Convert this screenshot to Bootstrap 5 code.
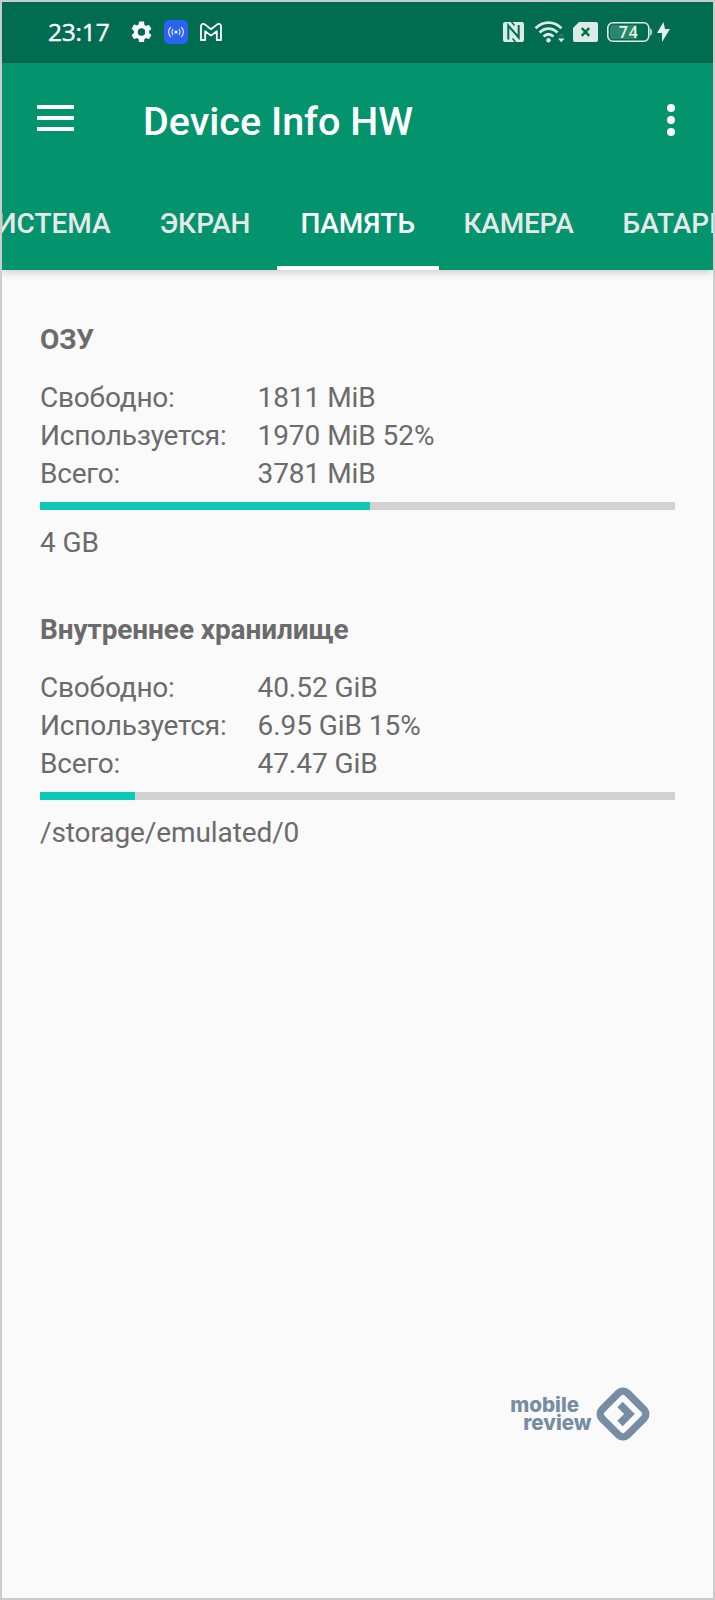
<!DOCTYPE html>
<html lang="ru">
<head>
<meta charset="utf-8">
<meta name="viewport" content="width=device-width, initial-scale=1">
<title>Device Info HW</title>
<link href="https://cdn.jsdelivr.net/npm/bootstrap@5.3.0/dist/css/bootstrap.min.css" rel="stylesheet">
<style>
  body { font-family: Roboto, "Noto Sans", sans-serif; color: #6b6b6b; background: #fafafa; }
  .screen { height: 1600px; border: 2px solid #ccc; background: #fafafa; }
  .status { height: 61px; background: #006c50; color: #fff; padding: 0 43px 2px 46px; }
  .status svg { display: block; flex: none; }
  .clock { font-family: "Open Sans", Roboto, sans-serif; font-size: 24.5px; font-weight: 500; line-height: 59px; width: 83px; letter-spacing: -.2px; -webkit-text-stroke: .4px #fff; }
  .gear { margin-right: 12px; }
  .cast { margin-right: 12px; }
  .wifi { margin: 0 8px 0 10px; }
  .battery { margin: 0 4px 0 9px; }
  .appbar { height: 207px; background: #03946e; color: #fff; box-shadow: 0 2px 9px rgba(0,0,0,.2); }
  .toolbar { height: 110px; padding-left: 35px; padding-right: 38px; }
  .app-title { font-size: 39.5px; font-weight: 500; line-height: 48px; margin: 8px 0 0 69px; }
  .tabs { height: 97px; margin-left: -48px; font-size: 28px; font-weight: 500; }
  .tabs .nav-link { color: #e6e9e8; padding: 32px 24.5px 0; height: 97px; line-height: 38px; white-space: nowrap; border-radius: 0; }
  .tabs .nav-link.active { color: #fff; border-bottom: 4px solid #fff; margin-left: 2px; padding-left: 23.5px; padding-right: 24px; }
  .tabs .active + .nav-link { letter-spacing: -.2px; }
  .content { padding: 51px 38px 0; font-size: 28px; line-height: 38px; }
  .section { height: 290px; }
  .section h2 { font-size: 28px; font-weight: 700; line-height: 38px; margin: 0 0 20px; letter-spacing: -.1px; }
  .info { display: grid; grid-template-columns: 217.5px 1fr; margin: 0; }
  .info dt { font-weight: 400; letter-spacing: -.2px; }
  .info dd { margin: 0; letter-spacing: -.05px; }
  .meter { height: 8px; border-radius: 0; background: #d2d2d2; margin: 9px 0 14px; }
  .meter .progress-bar { background: #0bc9b5; }
  .note { letter-spacing: -.1px; }
  .brand { color: #768da3; margin: 0 63.5px 157px 0; font-family: Inter, sans-serif; font-weight: 800; font-size: 20.5px; line-height: 18px; }
  .brand-name { margin-right: 4px; }
  .brand-name div + div { margin-left: 13px; }
</style>
</head>
<body>
<div class="screen d-flex flex-column overflow-hidden">
  <div class="status d-flex align-items-center">
    <span class="clock">23:17</span>
    <svg class="gear" width="21" height="22" viewBox="2 2 20 20" fill="#fff"><path d="M19.14 12.94c.04-.3.06-.61.06-.94s-.02-.64-.07-.94l2.03-1.58a.49.49 0 0 0 .12-.61l-1.92-3.32a.49.49 0 0 0-.59-.22l-2.39.96a7 7 0 0 0-1.62-.94l-.36-2.54A.48.48 0 0 0 13.92 2h-3.84a.48.48 0 0 0-.47.41l-.36 2.54c-.59.24-1.13.57-1.62.94l-2.39-.96a.48.48 0 0 0-.59.22L2.74 8.87a.48.48 0 0 0 .12.61l2.03 1.58c-.05.3-.09.63-.09.94s.02.64.07.94l-2.03 1.58a.49.49 0 0 0-.12.61l1.92 3.32c.12.22.37.29.59.22l2.39-.96c.5.38 1.03.7 1.62.94l.36 2.54c.05.24.24.41.48.41h3.84c.24 0 .44-.17.47-.41l.36-2.54a7 7 0 0 0 1.62-.94l2.39.96c.22.08.47 0 .59-.22l1.92-3.32a.48.48 0 0 0-.12-.61zM12 15.6a3.6 3.6 0 1 1 0-7.2 3.6 3.6 0 0 1 0 7.2z"/></svg>
    <svg class="cast" width="24" height="24" viewBox="0 0 24 24"><rect width="24" height="24" rx="5" fill="#2b62f5"/><circle cx="12" cy="12" r="1.6" fill="#fff"/><path d="M9.200 9.200a4 4 0 0 0 0 5.600M14.800 9.200a4 4 0 0 1 0 5.600M6.800 7a7 7 0 0 0 0 10M17.200 7a7 7 0 0 1 0 10" fill="none" stroke="#fff" stroke-width="1.100"/></svg>
    <svg width="22" height="18" viewBox="0 0 22 18" fill="none" stroke="#fff" stroke-width="1.800" stroke-linejoin="round"><path d="M1 17V3.200C1 1 3.200.2 4.800 1.400L11 6.200l6.200-4.800C18.800.2 21 1 21 3.200V17h-4.200V8.200L11 12.600 5.200 8.200V17z"/></svg>
    <div class="ms-auto d-flex align-items-center">
      <svg width="21" height="20" viewBox="0 0 21 20"><rect width="21" height="20" rx="2" fill="#dbece6"/><path d="M5.300 17.500V3.500L15.700 15.500V3" fill="none" stroke="#006c50" stroke-width="2"/><path d="M8.500 0l3 3.500M9.500 16.500l3 3.500" stroke="#006c50" stroke-width="1.500"/></svg>
      <svg class="wifi" width="31" height="24" viewBox="0 0 31 24" fill="none" stroke="#dbece6" stroke-width="2.700"><path d="M1.500 8.200c7.500-7.500 18.500-7.500 26 0M5.500 12.500c5.500-5.300 12.500-5.300 18 0M9.500 16.600c3.200-3 6.800-3 10 0"/><circle cx="14.500" cy="20.300" r="2.200" fill="#dbece6" stroke="none"/><path d="M24 18.500h6.500l-3.200 3.800z" fill="#dbece6" stroke="none"/><path d="M24 16.500h6.500l-3.200-3.300z" fill="#2b7d64" stroke="none"/></svg>
      <svg width="25" height="20" viewBox="0 0 25 20"><path d="M6 0h17a2 2 0 0 1 2 2v16a2 2 0 0 1-2 2H2a2 2 0 0 1-2-2V6z" fill="#dbece6"/><path d="M8.800 6l7.400 7.800M16.200 6l-7.400 7.800" stroke="#006c50" stroke-width="2.500"/></svg>
      <svg class="battery" width="46" height="20" viewBox="0 0 46 20"><path d="M5 3h25v14H5a2 2 0 0 1-2-2V5a2 2 0 0 1 2-2z" fill="#2b866b"/><rect x=".8" y=".8" width="41" height="18.400" rx="5" fill="none" stroke="#dbece6" stroke-width="1.600"/><path d="M43 6.500c3 0 3 7 0 7z" fill="#a5cec0"/><text x="21.300" y="15.700" text-anchor="middle" font-family="Open Sans" font-size="15.800" font-weight="600" fill="#e8f3ef" textLength="19">74</text></svg>
      <svg width="13" height="20" viewBox="0 0 13 20" fill="#e3f0eb"><path d="M6.500 0L0 11h5v9l8-13H8z"/></svg>
    </div>
  </div>

  <header class="appbar position-relative">
    <div class="toolbar d-flex align-items-center">
      <svg width="37" height="26" viewBox="0 0 37 26" fill="#fff" role="img" aria-label="Меню"><path d="M0 0h37v4H0zM0 11h37v4H0zM0 22h37v4H0z"/></svg>
      <h1 class="app-title">Device Info HW</h1>
      <svg class="ms-auto mt-1" width="8" height="32" viewBox="0 0 8 32" fill="#fff" role="img" aria-label="Ещё"><circle cx="4" cy="4" r="4"/><circle cx="4" cy="16" r="4"/><circle cx="4" cy="28" r="4"/></svg>
    </div>
    <nav class="tabs nav flex-nowrap">
      <a class="nav-link">СИСТЕМА</a>
      <a class="nav-link">ЭКРАН</a>
      <a class="nav-link active">ПАМЯТЬ</a>
      <a class="nav-link">КАМЕРА</a>
      <a class="nav-link">БАТАРЕЯ</a>
    </nav>
  </header>

  <main class="content flex-grow-1">
    <section class="section">
      <h2>ОЗУ</h2>
      <dl class="info">
        <dt>Свободно:</dt><dd>1811 MiB</dd>
        <dt>Используется:</dt><dd>1970 MiB 52%</dd>
        <dt>Всего:</dt><dd>3781 MiB</dd>
      </dl>
      <div class="progress meter"><div class="progress-bar" style="width:52%"></div></div>
      <div class="note">4 GB</div>
    </section>
    <section class="section">
      <h2>Внутреннее хранилище</h2>
      <dl class="info">
        <dt>Свободно:</dt><dd>40.52 GiB</dd>
        <dt>Используется:</dt><dd>6.95 GiB 15%</dd>
        <dt>Всего:</dt><dd>47.47 GiB</dd>
      </dl>
      <div class="progress meter"><div class="progress-bar" style="width:15%"></div></div>
      <div class="note">/storage/emulated/0</div>
    </section>
  </main>

  <footer class="brand d-flex align-items-center justify-content-end">
    <div class="brand-name"><div>mobile</div><div>review</div></div>
    <svg width="54" height="54" viewBox="0 0 54 54" fill="none" stroke="#768da3"><rect x="9" y="9" width="36" height="36" rx="6.500" stroke-width="7.500" transform="rotate(45 27 27)"/><path d="M24 17.500l9.500 9.500-9.500 9.500" stroke-width="7.500"/></svg>
  </footer>
</div>
<script src="https://cdn.jsdelivr.net/npm/bootstrap@5.3.0/dist/js/bootstrap.bundle.min.js"></script>
</body>
</html>
